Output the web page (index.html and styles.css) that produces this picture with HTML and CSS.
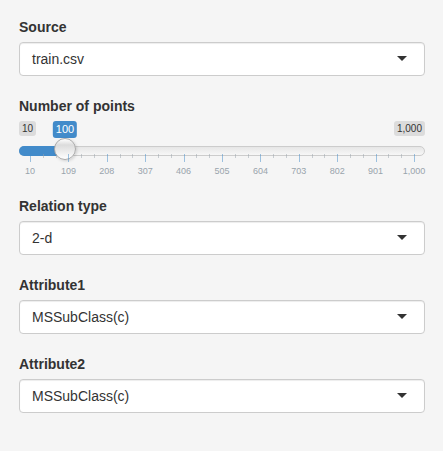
FILE: index.html
```html
<!DOCTYPE html>
<html>
<head>
<meta charset="utf-8">
<link rel="stylesheet" href="styles.css">
</head>
<body>
<div class="well">
  <div class="form-group">
    <label class="control-label">Source</label>
    <div class="selectize"><div class="selectize-input">train.csv</div></div>
  </div>

  <div class="form-group form-group-slider">
    <label class="control-label">Number of points</label>
    <div class="irs">
      <span class="irs-line"></span>
      <span class="irs-bar" style="width:46px"></span>
      <span class="irs-min">10</span>
      <span class="irs-max">1,000</span>
      <span class="irs-single" style="left:46px">100</span>
      <span class="irs-slider" style="left:35px"></span>
      <div class="irs-grid">
        <span class="pol" style="left:0%"></span>
        <span class="pol small" style="left:3.333%"></span>
        <span class="pol small" style="left:6.667%"></span>
        <span class="pol" style="left:10%"></span>
        <span class="pol small" style="left:13.333%"></span>
        <span class="pol small" style="left:16.667%"></span>
        <span class="pol" style="left:20%"></span>
        <span class="pol small" style="left:23.333%"></span>
        <span class="pol small" style="left:26.667%"></span>
        <span class="pol" style="left:30%"></span>
        <span class="pol small" style="left:33.333%"></span>
        <span class="pol small" style="left:36.667%"></span>
        <span class="pol" style="left:40%"></span>
        <span class="pol small" style="left:43.333%"></span>
        <span class="pol small" style="left:46.667%"></span>
        <span class="pol" style="left:50%"></span>
        <span class="pol small" style="left:53.333%"></span>
        <span class="pol small" style="left:56.667%"></span>
        <span class="pol" style="left:60%"></span>
        <span class="pol small" style="left:63.333%"></span>
        <span class="pol small" style="left:66.667%"></span>
        <span class="pol" style="left:70%"></span>
        <span class="pol small" style="left:73.333%"></span>
        <span class="pol small" style="left:76.667%"></span>
        <span class="pol" style="left:80%"></span>
        <span class="pol small" style="left:83.333%"></span>
        <span class="pol small" style="left:86.667%"></span>
        <span class="pol" style="left:90%"></span>
        <span class="pol small" style="left:93.333%"></span>
        <span class="pol small" style="left:96.667%"></span>
        <span class="pol" style="left:100%"></span>
        <span class="grid-text" style="left:0%">10</span>
        <span class="grid-text" style="left:10%">109</span>
        <span class="grid-text" style="left:20%">208</span>
        <span class="grid-text" style="left:30%">307</span>
        <span class="grid-text" style="left:40%">406</span>
        <span class="grid-text" style="left:50%">505</span>
        <span class="grid-text" style="left:60%">604</span>
        <span class="grid-text" style="left:70%">703</span>
        <span class="grid-text" style="left:80%">802</span>
        <span class="grid-text" style="left:90%">901</span>
        <span class="grid-text" style="left:100%">1,000</span>
      </div>
    </div>
  </div>

  <div class="form-group">
    <label class="control-label">Relation type</label>
    <div class="selectize"><div class="selectize-input">2-d</div></div>
  </div>

  <div class="form-group">
    <label class="control-label">Attribute1</label>
    <div class="selectize"><div class="selectize-input">MSSubClass(c)</div></div>
  </div>

  <div class="form-group">
    <label class="control-label">Attribute2</label>
    <div class="selectize"><div class="selectize-input">MSSubClass(c)</div></div>
  </div>
</div>
</body>
</html>
```

FILE: styles.css
```css
html, body {
  margin: 0;
  padding: 0;
  background: #f5f5f5;
}

body {
  font-family: "Liberation Sans", Arial, Helvetica, sans-serif;
  font-size: 14px;
  line-height: 20px;
  color: #333333;
}

.well {
  box-sizing: border-box;
  min-height: 451px;
  padding: 17px 18px 0 19px;
  background: #f5f5f5;
}

.form-group {
  margin-bottom: 15px;
}

.control-label {
  display: block;
  font-weight: bold;
  margin-bottom: 5px;
  height: 20px;
}

.selectize {
  position: relative;
  padding-bottom: 5px;
}

.selectize-input {
  position: relative;
  box-sizing: border-box;
  height: 34px;
  padding: 6px 12px;
  background: #ffffff;
  border: 1px solid #cccccc;
  border-radius: 4px;
  box-shadow: inset 0 1px 1px rgba(0, 0, 0, 0.075);
  color: #333333;
  font-size: 14px;
  line-height: 20px;
}

.selectize-input::after {
  content: "";
  position: absolute;
  top: 50%;
  right: 17px;
  margin-top: -3px;
  width: 0;
  height: 0;
  border-style: solid;
  border-width: 5px 5px 0 5px;
  border-color: #333333 transparent transparent transparent;
}

/* slider */
.irs {
  position: relative;
  height: 60px;
}

.irs-line {
  position: absolute;
  left: 0;
  right: 0;
  top: 25px;
  height: 10px;
  box-sizing: border-box;
  border: 1px solid #cccccc;
  border-radius: 16px;
  background: linear-gradient(to bottom, #dedede -50%, #ffffff 150%);
}

.irs-bar {
  position: absolute;
  left: 0;
  top: 25px;
  height: 10px;
  background: #428bca;
  border-radius: 16px 0 0 16px;
}

.irs-min, .irs-max {
  position: absolute;
  top: 0;
  padding: 1px 3px;
  font-size: 10px;
  line-height: 13px;
  color: #333333;
  background: rgba(0, 0, 0, 0.1);
  border-radius: 3px;
}

.irs-min { left: 0; }
.irs-max { right: 0; }

.irs-single {
  position: absolute;
  top: 0;
  transform: translateX(-50%);
  padding: 1px 3px;
  font-size: 11px;
  line-height: 15px;
  color: #ffffff;
  background: #428bca;
  border-radius: 3px;
}

.irs-slider {
  position: absolute;
  top: 17px;
  width: 22px;
  height: 22px;
  box-sizing: border-box;
  border: 1px solid #aaaaaa;
  border-radius: 27px;
  background: linear-gradient(to bottom, #ffffff 0%, #dcdcdc 30%, #ffffff 100%);
  box-shadow: 1px 1px 3px rgba(0, 0, 0, 0.15);
}

.irs-grid {
  position: absolute;
  left: 11px;
  right: 11px;
  top: 33px;
  height: 27px;
}

.pol {
  position: absolute;
  top: 0;
  width: 1px;
  height: 8px;
  background: #428bca;
  opacity: 0.5;
}

.pol.small {
  height: 4px;
  background: #99a4ac;
}

.grid-text {
  position: absolute;
  bottom: 5px;
  transform: translateX(-50%);
  font-size: 9px;
  line-height: 9px;
  color: #99a4ac;
  white-space: nowrap;
}
```
